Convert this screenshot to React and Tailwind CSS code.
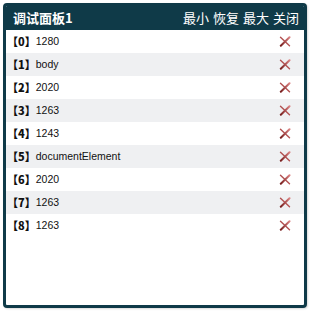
import React from 'react';

const items = ['1280', 'body', '2020', '1263', '1243', 'documentElement', '2020', '1263', '1263'];

function CloseIcon() {
  return (
    <svg width="12" height="11" viewBox="0 0 12 11">
      <defs>
        <linearGradient id="xg" x1="1" y1="0" x2="0" y2="1">
          <stop offset="0" stopColor="#d98080" />
          <stop offset="1" stopColor="#7a2020" />
        </linearGradient>
      </defs>
      <path d="M1.5 1.2 L10.5 9.8" stroke="#b25050" strokeWidth="1.4" strokeLinecap="round" />
      <path d="M10.5 1.2 L1.8 9.8" stroke="url(#xg)" strokeWidth="2" strokeLinecap="round" />
    </svg>
  );
}

export default function App() {
  return (
    <div className="w-[316px] h-[311px] bg-white pt-[3px] pl-[3px]">
      <div className="w-[304px] h-[305px] border-[3px] border-[#0f3a48] rounded-[4px] bg-white flex flex-col overflow-hidden shadow-[1px_1px_2px_rgba(0,0,0,0.15)]">
        {/* 标题栏 */}
        <div className="h-[24px] -mt-[3px] pt-[3px] box-content bg-[#0f3a48] flex items-center justify-between pl-[7px] pr-[5px] text-white text-[13px] font-['Noto_Sans_CJK_SC',sans-serif]">
          <span className="font-bold">调试面板1</span>
          <div className="flex gap-[4px]">
            <span>最小</span>
            <span>恢复</span>
            <span>最大</span>
            <span>关闭</span>
          </div>
        </div>

        {/* 列表 */}
        <div className="flex flex-col">
          {items.map((item, i) => (
            <div
              key={i}
              className={`h-[23px] flex items-center justify-between pl-[1px] pr-[13px] ${i % 2 === 1 ? 'bg-[#eff0f2]' : 'bg-white'}`}
            >
              <div className="flex items-center text-[#111]">
                <span className="text-[11px] font-black font-['Noto_Sans_CJK_SC',sans-serif]">【{i}】</span>
                <span className="text-[10.5px] font-['Liberation_Sans',Arial,sans-serif]">{item}</span>
              </div>
              <CloseIcon />
            </div>
          ))}
        </div>
      </div>
    </div>
  );
}
